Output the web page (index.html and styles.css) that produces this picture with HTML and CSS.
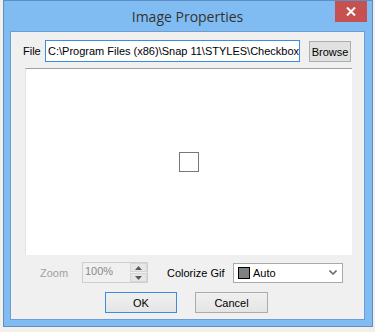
FILE: index.html
```html
<!DOCTYPE html>
<html lang="en">

<head>
  <meta charset="utf-8">
  <title>Image Properties</title>
  <link rel="stylesheet" href="styles.css">
</head>

<body>

  <!-- Dialog window -->
  <div class="window">
    <div class="titlebar">
      <span class="title">Image Properties</span>
      <div class="close-btn">
        <svg width="10" height="9" viewBox="0 0 10 9">
          <path d="M1 0.5 L9 8.5 M9 0.5 L1 8.5" stroke="#fff" stroke-width="2" fill="none" />
        </svg>
      </div>
    </div>

    <div class="client">
      <!-- File row -->
      <div class="file-row">
        <span class="file-label">File</span>
        <div class="file-input">C:\Program Files (x86)\Snap 11\STYLES\Checkbox</div>
        <button class="btn browse-btn">Browse</button>
      </div>

      <!-- Preview -->
      <div class="preview">
        <div class="checkbox-sample"></div>
      </div>

      <!-- Zoom / colorize row -->
      <div class="options-row">
        <span class="zoom-label">Zoom</span>
        <div class="spin">
          <span class="spin-value">100%</span>
          <div class="spin-buttons">
            <div class="spin-btn">
              <svg width="7" height="4" viewBox="0 0 7 4"><path d="M0 4 L3.5 0 L7 4 Z" fill="#5a5a5a" /></svg>
            </div>
            <div class="spin-btn">
              <svg width="7" height="4" viewBox="0 0 7 4"><path d="M0 0 L3.5 4 L7 0 Z" fill="#5a5a5a" /></svg>
            </div>
          </div>
        </div>
        <span class="colorize-label">Colorize Gif</span>
        <div class="combo">
          <span class="swatch"></span>
          <span class="combo-text">Auto</span>
          <svg class="chevron" width="8" height="5" viewBox="0 0 8 5">
            <path d="M0.5 0.5 L4 4 L7.5 0.5" stroke="#6d6d6d" stroke-width="1.6" fill="none" />
          </svg>
        </div>
      </div>

      <!-- Buttons -->
      <div class="button-row">
        <button class="btn ok-btn">OK</button>
        <button class="btn cancel-btn">Cancel</button>
      </div>
    </div>
  </div>

</body>

</html>
```

FILE: styles.css
```css
body {
  margin: 0;
  background-color: #f3f0ea;
  font-family: "Liberation Sans", Arial, sans-serif;
  font-size: 11px;
}

.window {
  position: relative;
  margin-left: 3px;
  width: 370px;
  height: 327px;
  box-sizing: border-box;
  border: 1px solid #5d8fc6;
  background-color: #80bcf2;
  padding: 0 7px 6px 6px;
}

.titlebar {
  height: 30px;
  display: flex;
  align-items: center;
  justify-content: center;
}

.title {
  font-family: "Open Sans", "Noto Sans", sans-serif;
  font-size: 14px;
  color: #333;
  margin-top: 1px;
}

.close-btn {
  position: absolute;
  top: 0;
  left: 331px;
  width: 32px;
  height: 21px;
  background-color: #c75050;
  display: flex;
  align-items: center;
  justify-content: center;
}

.client {
  height: 289px;
  box-sizing: border-box;
  background-color: #f0f0f0;
  border: 1px solid #6d9dd3;
  padding: 8px 0 0 12px;
}

/* File row */
.file-row {
  display: flex;
  align-items: center;
  height: 22px;
}

.file-label {
  width: 22px;
  color: #000;
}

.file-input {
  width: 255px;
  height: 22px;
  box-sizing: border-box;
  border: 1px solid #3c8ce0;
  background-color: #fff;
  padding: 0 0 0 2px;
  line-height: 20px;
  white-space: nowrap;
  overflow: hidden;
  color: #000;
}

.btn {
  font-family: "Liberation Sans", Arial, sans-serif;
  font-size: 11px;
  color: #000;
  background: linear-gradient(#f0f0f0, #e5e5e5);
  border: 1px solid #acacac;
  padding: 0;
}

.browse-btn {
  margin-left: 9px;
  width: 42px;
  height: 21px;
  margin-top: 1px;
  background: #e1e1e1;
  border-color: #adadad;
}

/* Preview */
.preview {
  margin: 6px 0 0 2px;
  width: 327px;
  height: 187px;
  box-sizing: border-box;
  background-color: #fff;
  border-top: 1px solid #a0a0a0;
  border-left: 1px solid #e3e3e3;
  display: flex;
  align-items: center;
  justify-content: center;
}

.checkbox-sample {
  width: 20px;
  height: 20px;
  box-sizing: border-box;
  border: 1px solid #777;
}

/* Options row */
.options-row {
  display: flex;
  align-items: center;
  margin-top: 7px;
  height: 21px;
}

.zoom-label {
  margin-left: 17px;
  width: 42px;
  color: #a0a0a0;
}

.spin {
  width: 66px;
  height: 21px;
  box-sizing: border-box;
  border: 1px solid #cfcfcf;
  display: flex;
  justify-content: space-between;
}

.spin-value {
  padding-left: 2px;
  line-height: 17px;
  color: #8a8a8a;
}

.spin-buttons {
  width: 17px;
  display: flex;
  flex-direction: column;
  gap: 1px;
}

.spin-btn {
  flex: 1;
  background-color: #e6e6e6;
  border: 1px solid #d6d6d6;
  display: flex;
  align-items: center;
  justify-content: center;
}

.colorize-label {
  margin-left: 19px;
  width: 66px;
  color: #000;
}

.combo {
  width: 110px;
  height: 20px;
  box-sizing: border-box;
  border: 1px solid #a9a9a9;
  background-color: #fff;
  display: flex;
  align-items: center;
  padding-left: 4px;
}

.swatch {
  width: 12px;
  height: 12px;
  box-sizing: border-box;
  border: 1px solid #000;
  background-color: #808080;
}

.combo-text {
  margin-left: 3px;
  color: #000;
  flex: 1;
}

.chevron {
  margin-right: 5px;
}

/* Buttons */
.button-row {
  display: flex;
  margin: 9px 0 0 82px;
  gap: 18px;
}

.ok-btn {
  width: 72px;
  height: 21px;
  border-color: #3c8ce0;
}

.cancel-btn {
  width: 73px;
  height: 21px;
}
```
